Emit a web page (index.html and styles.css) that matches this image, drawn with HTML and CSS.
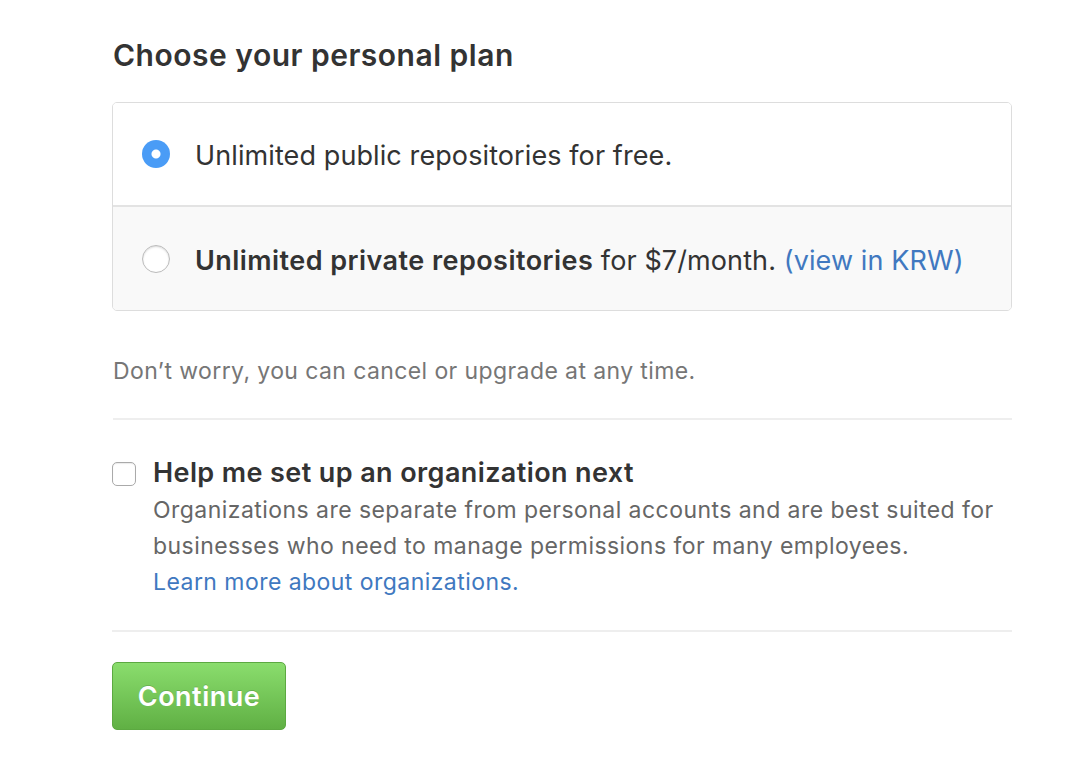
FILE: index.html
```html
<!DOCTYPE html>
<html>
<head>
<meta charset="utf-8">
<link rel="stylesheet" href="styles.css">
</head>
<body>
<div class="page">
  <h2 class="title">Choose your personal plan</h2>
  <div class="plans">
    <label class="plan plan-free">
      <span class="radio radio-on"></span>
      <span class="plan-text">Unlimited public repositories for free.</span>
    </label>
    <label class="plan plan-paid">
      <span class="radio"></span>
      <span class="plan-text"><strong>Unlimited private repositories</strong> for $7/month. <a class="link" href="#">(view in KRW)</a></span>
    </label>
  </div>
  <p class="note">Don’t worry, you can cancel or upgrade at any time.</p>
  <div class="org">
    <span class="checkbox"></span>
    <div class="org-body">
      <div class="org-title">Help me set up an organization next</div>
      <p class="org-desc">Organizations are separate from personal accounts and are best suited for businesses who need to manage permissions for many employees.<br><a class="link" href="#">Learn more about organizations.</a></p>
    </div>
  </div>
  <div class="actions">
    <button class="btn">Continue</button>
  </div>
</div>
</body>
</html>
```
FILE: styles.css
```css
html, body {
  margin: 0;
  padding: 0;
  background: #fff;
}
body {
  font-family: Inter, "Liberation Sans", Arial, sans-serif;
  color: #333;
}
.page {
  width: 900px;
  padding: 35px 0 0 112px;
}
.title {
  margin: 0 0 27px 1px;
  font-size: 30px;
  line-height: 40px;
  font-weight: 600;
  letter-spacing: 0.5px;
  color: #333;
}
.plans {
  border: 1px solid #ddd;
  border-radius: 5px;
  overflow: hidden;
}
.plan {
  display: flex;
  align-items: center;
  height: 103px;
  padding-left: 29px;
  font-size: 27px;
  letter-spacing: 0.1px;
  color: #333;
}
.plan-free {
  background: #fff;
  border-bottom: 2px solid #e3e3e3;
  height: 102px;
}
.plan-paid {
  background: #f9f9f9;
}
.plan-text {
  margin-left: 25px;
  padding-top: 3px;
}
.plan-text strong {
  font-weight: 600;
  letter-spacing: 0.45px;
}
.radio {
  width: 26px;
  height: 26px;
  border-radius: 50%;
  border: 1px solid #bbb;
  background: #fff;
  box-shadow: inset 0 1px 2px rgba(0,0,0,0.15);
  flex: none;
}
.radio-on {
  width: 28px;
  height: 28px;
  border: none;
  background: radial-gradient(circle, #fff 0 4px, #4a9cf6 5px);
  box-shadow: none;
}
.link {
  color: #4078c0;
  text-decoration: none;
}
.note {
  margin: 45px 0 0 1px;
  font-size: 23px;
  line-height: 30px;
  letter-spacing: 0.4px;
  color: #767676;
  padding-bottom: 32px;
  border-bottom: 2px solid #eee;
}
.org {
  display: flex;
  align-items: flex-start;
  padding: 38px 0 30px;
  border-bottom: 2px solid #eee;
}
.checkbox {
  flex: none;
  width: 22px;
  height: 22px;
  margin-top: 4px;
  border: 1px solid #aaa;
  border-radius: 5px;
  background: #fff;
  box-shadow: inset 0 1px 1px rgba(0,0,0,0.08);
}
.org-body {
  margin-left: 17px;
}
.org-title {
  font-size: 27px;
  line-height: 30px;
  font-weight: 600;
  letter-spacing: 0.4px;
  color: #333;
}
.org-desc {
  margin: 4px 0 0;
  font-size: 23px;
  line-height: 36px;
  letter-spacing: 0.45px;
  color: #666;
}
.actions {
  padding-top: 30px;
}
.btn {
  width: 174px;
  height: 68px;
  border: 1px solid #5ca941;
  border-radius: 5px;
  background: linear-gradient(#8add6d, #60b044);
  color: #fff;
  font-family: Inter, "Liberation Sans", Arial, sans-serif;
  font-size: 27px;
  font-weight: 600;
  letter-spacing: 0.5px;
  text-shadow: 0 -1px 0 rgba(0,0,0,0.15);
  cursor: pointer;
  padding: 0;
}
```
